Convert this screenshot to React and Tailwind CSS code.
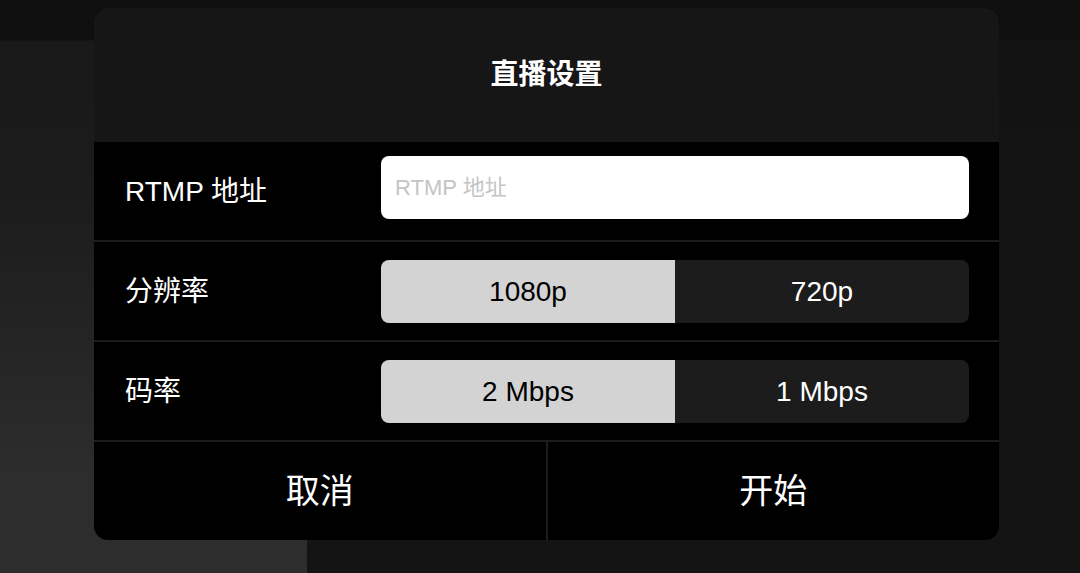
import React from "react";

const font = { fontFamily: '"Liberation Sans", "Noto Sans CJK SC", sans-serif' };

function Segment({ left, right }) {
  return (
    <div className="flex h-[63px] w-[588px] overflow-hidden rounded-[8px]">
      <div className="flex flex-1 items-center justify-center bg-[#d3d3d3] text-[28px] text-black">{left}</div>
      <div className="flex flex-1 items-center justify-center bg-[#1c1c1c] text-[28px] text-white">{right}</div>
    </div>
  );
}

function Row({ label, children, top = "pt-[18px]" }) {
  return (
    <div className="flex h-[98px]">
      <div className="flex h-full w-[287px] items-center pl-[31px] pt-[2px] text-[28px] text-white">{label}</div>
      <div className={top}>{children}</div>
    </div>
  );
}

export default function App() {
  return (
    <div className="relative h-[573px] w-[1080px] overflow-hidden bg-[#131313]" style={font}>
      <div className="absolute inset-0 flex">
        <div className="h-full w-[307px] bg-[linear-gradient(to_bottom,#0f0f0f_0px,#0f0f0f_40px,#191919_41px,#1c1c1c_200px,#2d2d2d_480px,#2d2d2d_573px)]" />
        <div className="h-full flex-1 bg-[linear-gradient(to_bottom,#0f0f0f_0px,#0f0f0f_40px,#131313_41px,#141414_573px)]" />
      </div>
      <div className="relative pl-[94px] pt-[8px]">
        <div className="w-[905px] overflow-hidden rounded-[14px] bg-black">
          <div className="flex h-[134px] items-center justify-center bg-[#161616] text-[28px] font-bold text-white">
            直播设置
          </div>
          <Row label="RTMP 地址" top="pt-[14px]">
            <div className="flex h-[63px] w-[588px] items-center rounded-[8px] bg-white pl-[14px] text-[22px] text-[#c4c4c4]">
              RTMP 地址
            </div>
          </Row>
          <div className="h-[2px] bg-[#1c1c1c]" />
          <Row label="分辨率">
            <Segment left="1080p" right="720p" />
          </Row>
          <div className="h-[2px] bg-[#1c1c1c]" />
          <Row label="码率">
            <Segment left="2 Mbps" right="1 Mbps" />
          </Row>
          <div className="h-[2px] bg-[#1c1c1c]" />
          <div className="flex h-[98px]">
            <div className="flex flex-1 items-center justify-center text-[34px] text-white">取消</div>
            <div className="w-[2px] bg-[#1c1c1c]" />
            <div className="flex flex-1 items-center justify-center text-[34px] text-white">开始</div>
          </div>
        </div>
      </div>
    </div>
  );
}
